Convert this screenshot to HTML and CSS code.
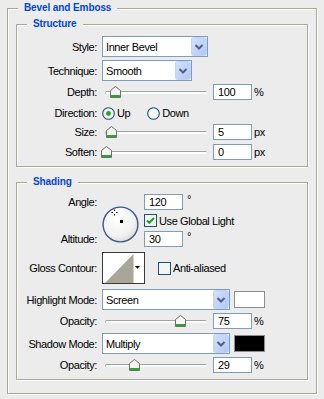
FILE: index.html
```html
<!DOCTYPE html>
<html>
<head>
<meta charset="utf-8">
<link rel="stylesheet" href="styles.css">
</head>
<body>
<div class="dialog">
  <fieldset class="group outer">
    <legend>Bevel and Emboss</legend>

    <fieldset class="group inner structure">
      <legend>Structure</legend>

      <div class="row h21 first">
        <span class="lbl">Style:</span>
        <div class="select w-style"><span class="val">Inner Bevel</span>
          <svg class="ddbtn" width="16" height="19" viewBox="0 0 16 19"><defs><linearGradient id="bg1" x1="0" y1="0" x2="1" y2="1"><stop offset="0" stop-color="#d3e0fd"/><stop offset="1" stop-color="#b2c7f6"/></linearGradient></defs><rect x="0.5" y="0.5" width="15" height="18" rx="2" fill="url(#bg1)" stroke="#c2d3fb"/><path d="M4.5 8 L8 11.5 L11.5 8" fill="none" stroke="#4d6185" stroke-width="2"/></svg>
        </div>
      </div>

      <div class="row h21 mt3">
        <span class="lbl">Technique:</span>
        <div class="select w-tech"><span class="val">Smooth</span>
          <svg class="ddbtn" width="16" height="19" viewBox="0 0 16 19"><rect x="0.5" y="0.5" width="15" height="18" rx="2" fill="url(#bg1)" stroke="#c2d3fb"/><path d="M4.5 8 L8 11.5 L11.5 8" fill="none" stroke="#4d6185" stroke-width="2"/></svg>
        </div>
      </div>

      <div class="row h16 mt3">
        <span class="lbl">Depth:</span>
        <div class="slider"><span class="track"></span>
          <svg class="thumb" style="left:7.5px" width="11" height="12" viewBox="0 0 11 12"><path d="M0.5 4.5 L5.5 0.5 L10.5 4.5 V11.5 H0.5 Z" fill="#f6f6f6" stroke="#6f6f6f"/><rect x="1" y="9" width="9" height="2" fill="#2aa52a"/></svg>
        </div>
        <span class="field">100</span><span class="unit">%</span>
      </div>

      <div class="row h20 mt3">
        <span class="lbl">Direction:</span>
        <label class="radio"><svg width="13" height="13" viewBox="0 0 13 13"><circle cx="6.5" cy="6.5" r="5.8" fill="#f4f4f0" stroke="#1c5180" stroke-width="1.1"/><circle cx="6.5" cy="6.5" r="2.4" fill="#2ca02c"/></svg><span>Up</span></label>
        <label class="radio second"><svg width="13" height="13" viewBox="0 0 13 13"><circle cx="6.5" cy="6.5" r="5.8" fill="#f4f4f0" stroke="#1c5180" stroke-width="1.1"/></svg><span>Down</span></label>
      </div>

      <div class="row h16 mt1">
        <span class="lbl">Size:</span>
        <div class="slider"><span class="track"></span>
          <svg class="thumb" style="left:4px" width="11" height="12" viewBox="0 0 11 12"><path d="M0.5 4.5 L5.5 0.5 L10.5 4.5 V11.5 H0.5 Z" fill="#f6f6f6" stroke="#6f6f6f"/><rect x="1" y="9" width="9" height="2" fill="#2aa52a"/></svg>
        </div>
        <span class="field">5</span><span class="unit">px</span>
      </div>

      <div class="row h16 mt4">
        <span class="lbl">Soften:</span>
        <div class="slider"><span class="track"></span>
          <svg class="thumb" style="left:-1px" width="11" height="12" viewBox="0 0 11 12"><path d="M0.5 4.5 L5.5 0.5 L10.5 4.5 V11.5 H0.5 Z" fill="#f6f6f6" stroke="#6f6f6f"/><rect x="1" y="9" width="9" height="2" fill="#2aa52a"/></svg>
        </div>
        <span class="field">0</span><span class="unit">px</span>
      </div>
    </fieldset>

    <fieldset class="group inner shading">
      <legend>Shading</legend>

      <div class="angle-grid">
        <span class="lbl g-angle">Angle:</span>
        <svg class="dial" width="38" height="38" viewBox="0 0 38 38">
          <defs><radialGradient id="dg" cx="0.4" cy="0.35" r="0.7"><stop offset="0" stop-color="#ffffff"/><stop offset="0.7" stop-color="#f1f1f1"/><stop offset="1" stop-color="#d6d6d6"/></radialGradient></defs>
          <circle cx="18.5" cy="18.5" r="17.4" fill="url(#dg)" stroke="#3d5a8a" stroke-width="1.4"/>
          <path d="M9.5 6.5 H11 M14 6.5 H15.5 M12.5 3.5 V5 M12.5 8 V9.5" stroke="#000" stroke-width="1"/>
          <rect x="18" y="14" width="3" height="3" fill="#000"/>
        </svg>
        <div class="g-angle-in"><span class="field">120</span><span class="unit deg">°</span></div>
        <label class="check g-global"><svg width="13" height="13" viewBox="0 0 13 13"><rect x="0.5" y="0.5" width="12" height="12" fill="#f4f4f0" stroke="#1c5180"/><path d="M3 6.5 L5.3 8.8 L10 4" fill="none" stroke="#21a121" stroke-width="2"/></svg><span>Use Global Light</span></label>
        <span class="lbl g-alt">Altitude:</span>
        <div class="g-alt-in"><span class="field">30</span><span class="unit deg">°</span></div>
      </div>

      <div class="row h31 mt5">
        <span class="lbl">Gloss Contour:</span>
        <svg class="contour" width="43" height="32" viewBox="0 0 43 32"><rect x="0.5" y="0.5" width="42" height="31" fill="#fff" stroke="#3a3a3a"/><path d="M3 31 L31.5 2 L31.5 31 Z" fill="#a9a598"/><path d="M33 14 H38 L35.5 16.8 Z" fill="#000"/></svg>
        <label class="check aa"><svg width="13" height="13" viewBox="0 0 13 13"><rect x="0.5" y="0.5" width="12" height="12" fill="#f4f4f0" stroke="#1c5180"/></svg><span>Anti-aliased</span></label>
      </div>

      <div class="row h21 mt5">
        <span class="lbl">Highlight Mode:</span>
        <div class="select w-mode"><span class="val">Screen</span>
          <svg class="ddbtn" width="16" height="19" viewBox="0 0 16 19"><rect x="0.5" y="0.5" width="15" height="18" rx="2" fill="url(#bg1)" stroke="#c2d3fb"/><path d="M4.5 8 L8 11.5 L11.5 8" fill="none" stroke="#4d6185" stroke-width="2"/></svg>
        </div>
        <span class="swatch white"></span>
      </div>

      <div class="row h16 mt3">
        <span class="lbl">Opacity:</span>
        <div class="slider"><span class="track"></span>
          <svg class="thumb" style="left:73px" width="11" height="12" viewBox="0 0 11 12"><path d="M0.5 4.5 L5.5 0.5 L10.5 4.5 V11.5 H0.5 Z" fill="#f6f6f6" stroke="#6f6f6f"/><rect x="1" y="9" width="9" height="2" fill="#2aa52a"/></svg>
        </div>
        <span class="field">75</span><span class="unit">%</span>
      </div>

      <div class="row h21 mt4">
        <span class="lbl">Shadow Mode:</span>
        <div class="select w-mode"><span class="val">Multiply</span>
          <svg class="ddbtn" width="16" height="19" viewBox="0 0 16 19"><rect x="0.5" y="0.5" width="15" height="18" rx="2" fill="url(#bg1)" stroke="#c2d3fb"/><path d="M4.5 8 L8 11.5 L11.5 8" fill="none" stroke="#4d6185" stroke-width="2"/></svg>
        </div>
        <span class="swatch black"></span>
      </div>

      <div class="row h16 mt3">
        <span class="lbl">Opacity:</span>
        <div class="slider"><span class="track"></span>
          <svg class="thumb" style="left:27px" width="11" height="12" viewBox="0 0 11 12"><path d="M0.5 4.5 L5.5 0.5 L10.5 4.5 V11.5 H0.5 Z" fill="#f6f6f6" stroke="#6f6f6f"/><rect x="1" y="9" width="9" height="2" fill="#2aa52a"/></svg>
        </div>
        <span class="field">29</span><span class="unit">%</span>
      </div>
    </fieldset>
  </fieldset>
</div>
</body>
</html>
```
FILE: styles.css
```css
* { box-sizing: border-box; }
html, body { margin: 0; padding: 0; }
body {
  background: #ececec;
  font-family: "Liberation Sans", Arial, sans-serif;
  font-size: 11px;
  letter-spacing: -0.4px;
  color: #000;
}
.dialog {
  width: 324px;
  height: 399px;
  padding: 1px 0 0 7px;
  overflow: hidden;
}
.group {
  margin: 0;
  padding: 0;
  min-width: 0;
  border: 1px solid #a9a898;
  box-shadow: inset 1px 1px 0 #fff, 1px 1px 0 #fff;
}
.group > legend {
  margin-left: 10px;
  padding: 0 6px;
  height: 14px;
  line-height: 14px;
  font-size: 10px;
  font-weight: bold;
  letter-spacing: -0.1px;
  color: #0046d5;
  background: #ececec;
}
.outer {
  width: 310px;
  padding-bottom: 13px;
}
.inner {
  margin: 2px 8px 0;
  padding-bottom: 6px;
}
.shading { margin-top: 8px; }

.row { display: flex; align-items: center; }
.first { margin-top: 5px; }
.h16 { height: 16px; }
.h20 { height: 20px; }
.h21 { height: 21px; }
.h31 { height: 32px; }
.mt1 { margin-top: 1px; }
.mt3 { margin-top: 3px; }
.mt4 { margin-top: 4px; }
.mt5 { margin-top: 5px; }

.lbl {
  flex: none;
  width: 80px;
  margin-right: 5px;
  text-align: right;
  white-space: nowrap;
}

.select {
  position: relative;
  height: 21px;
  border: 1px solid #7f9db9;
  background: #fff;
  display: flex;
  align-items: center;
  padding-left: 3px;
}
.select .val { flex: 1; }
.select .ddbtn { flex: none; display: block; }
.w-style { width: 106px; }
.w-tech { width: 90px; }
.w-mode { width: 128px; }

.slider {
  position: relative;
  width: 107px;
  height: 16px;
  margin-right: 4px;
  flex: none;
}
.track {
  position: absolute;
  left: 3px;
  right: 2px;
  top: 7px;
  height: 3px;
  border-top: 1px solid #a3a3a3;
  border-left: 1px solid #b0b0b0;
  background: #fdfdfd;
  border-radius: 2px;
}
.thumb {
  position: absolute;
  top: 2px;
  display: block;
}

.field {
  flex: none;
  width: 39px;
  height: 16px;
  border: 1px solid #7f9db9;
  background: #fff;
  padding-left: 4px;
  line-height: 14px;
}
.unit { margin-left: 2px; }
.deg { margin-left: 4px; position: relative; top: -3px; }

.radio { display: flex; align-items: center; }
.radio svg { display: block; margin-right: 2px; }
.radio.second { margin-left: 17px; }

.check { display: flex; align-items: center; }
.check svg { display: block; margin-right: 2px; }

.angle-grid {
  display: grid;
  grid-template-columns: 85px 42px auto;
  grid-template-rows: 16px 21px 16px;
  margin-top: 5px;
}
.angle-grid .lbl { align-self: center; }
.g-angle { grid-column: 1; grid-row: 1; }
.dial { grid-column: 2; grid-row: 1 / 4; margin-top: 12px; display: block; }
.g-angle-in { grid-column: 3; grid-row: 1; display: flex; align-items: center; }
.g-global { grid-column: 3; grid-row: 2; align-self: center; }
.g-alt { grid-column: 1; grid-row: 3; }
.g-alt-in { grid-column: 3; grid-row: 3; display: flex; align-items: center; }

.contour { display: block; flex: none; }
.aa { margin-left: 13px; }

.swatch {
  flex: none;
  width: 31px;
  height: 17px;
  margin-left: 4px;
  border: 1px solid #8e8e8e;
}
.swatch.white { background: #fff; }
.swatch.black { background: #000; }
```
